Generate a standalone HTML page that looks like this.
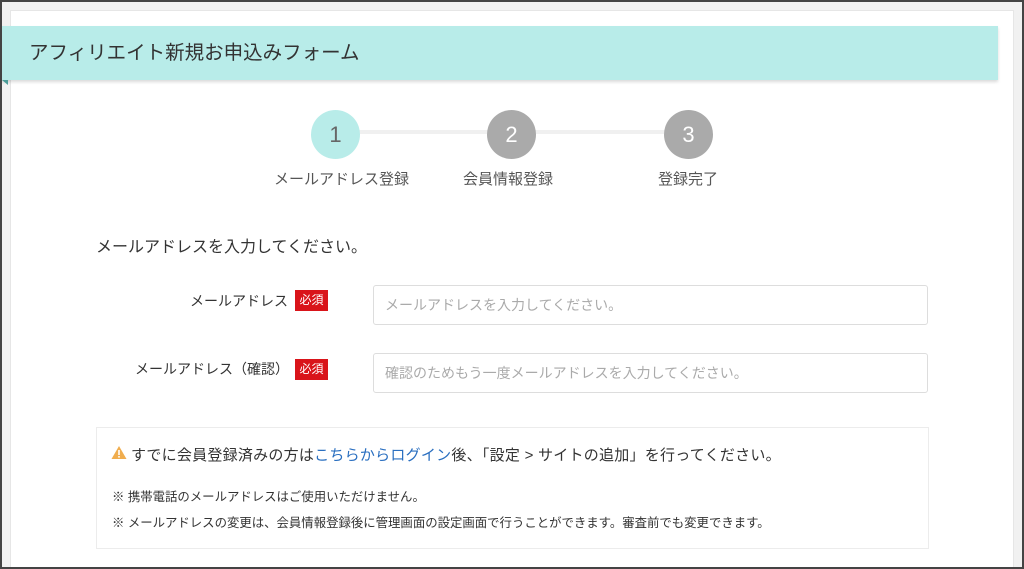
<!DOCTYPE html>
<html><head><meta charset="utf-8"><style>
*{margin:0;padding:0;box-sizing:border-box}
html,body{width:1024px;height:569px;overflow:hidden}
body{background:#f1f1f1;font-family:"Liberation Sans","Noto Sans CJK JP",sans-serif;color:#333;position:relative}
.frame{position:absolute;left:0;top:0;width:1024px;height:569px;border:2px solid #444;z-index:10;pointer-events:none}
.card{position:absolute;left:10px;top:10px;width:1004px;height:559px;background:#fff;border:1px solid #e6e6e6;border-bottom:none}
.hdr{position:absolute;left:0;top:26px;width:998px;height:54px;background:#b8ece9;box-shadow:0 2px 3px rgba(0,0,0,.15);font-size:19.5px;line-height:54px;padding-left:29px;color:#333}
.tri{position:absolute;left:2px;top:80px;width:0;height:0;border-top:5px solid #4a9c98;border-left:6px solid transparent}
.line{position:absolute;top:130px;height:4px;background:#f0f0f0}
.c{position:absolute;top:110px;width:49px;height:49px;border-radius:50%;background:#aaa;color:#fff;font-size:22px;text-align:center;line-height:49px}
.lab{position:absolute;top:168px;font-size:15px;color:#555;white-space:nowrap}
.t{position:absolute;white-space:nowrap}
.inp{position:absolute;left:373px;width:555px;height:40px;border:1px solid #ddd;border-radius:3px;font-size:14px;color:#aaa;line-height:38px;padding-left:11px}
.req{position:absolute;width:33px;height:21px;background:#d9141a;color:#fff;font-size:12px;text-align:center;line-height:21px}
.note{position:absolute;left:96px;top:427px;width:833px;height:122px;border:1px solid #ececec}
</style></head><body>
<div class="card"></div>
<div class="hdr">アフィリエイト新規お申込みフォーム</div>
<div class="tri"></div>
<div class="line" style="left:335px;width:353px"></div>
<div class="c" style="left:311px;background:#b8ece9;color:#666">1</div>
<div class="c" style="left:487px">2</div>
<div class="c" style="left:664px">3</div>
<div class="lab" style="left:274px">メールアドレス登録</div>
<div class="lab" style="left:463px">会員情報登録</div>
<div class="lab" style="left:658px">登録完了</div>
<div class="t" style="left:96px;top:233px;font-size:16px">メールアドレスを入力してください。</div>
<div class="t" style="left:190px;top:291px;font-size:14px">メールアドレス</div>
<div class="req" style="left:295px;top:290px">必須</div>
<div class="inp" style="top:285px">メールアドレスを入力してください。</div>
<div class="t" style="left:135px;top:359px;font-size:14px">メールアドレス（確認）</div>
<div class="req" style="left:295px;top:359px">必須</div>
<div class="inp" style="top:353px">確認のためもう一度メールアドレスを入力してください。</div>
<div class="note"></div>
<svg style="position:absolute;left:111px;top:445px" width="16" height="15" viewBox="0 0 16 15"><path d="M8 1L15.5 14H0.5Z" fill="#f0ad4e"/><rect x="7.2" y="5" width="1.6" height="5" fill="#fff"/><rect x="7.2" y="11" width="1.6" height="1.6" fill="#fff"/></svg>
<div class="t" style="left:131px;top:444px;font-size:15px;letter-spacing:0.25px">すでに会員登録済みの方は<span style="color:#2a6fc0">こちらからログイン</span>後、「設定 &gt; サイトの追加」を行ってください。</div>
<div class="t" style="left:112px;top:487px;font-size:12.4px">※ 携帯電話のメールアドレスはご使用いただけません。</div>
<div class="t" style="left:112px;top:513px;font-size:12.4px">※ メールアドレスの変更は、会員情報登録後に管理画面の設定画面で行うことができます。審査前でも変更できます。</div>
<div class="frame"></div>
</body></html>
